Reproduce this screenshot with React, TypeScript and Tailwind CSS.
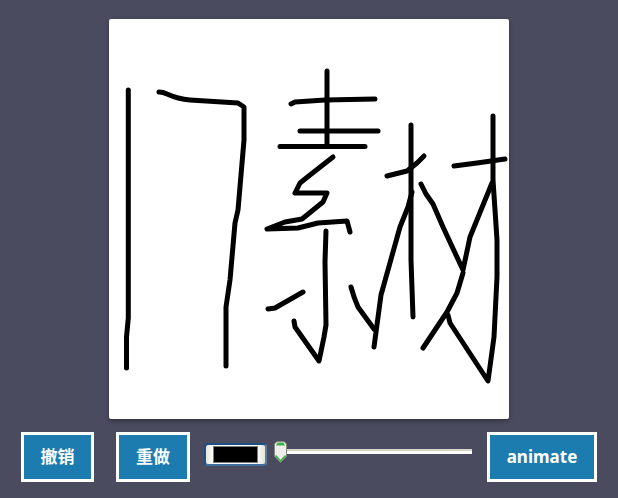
const strokes = [
  "M128.3 90 L128.3 318 L126.5 337 L126.5 368",
  "M159 92 Q163 92 167 94 Q178 99 190 100 L238 103 L244 107 L244 140 L238 210 L235 223 L230 280 L226 307 L226 366",
  "M327 71 L327 145",
  "M291 104 L295 102 L325 100 L375 99",
  "M300 131 L378 131",
  "M280 146.5 L365 146.5",
  "M333 157 L310 175 L300 183 L295 193 L327 193 L323 202 L302 219 L285 222 L267 229 L298 228 L318 223 L347 221 L350 232",
  "M326 231 L325 262 L326 325 L324 337 L319 361 L295 327 L294 321",
  "M303 292 L275 308 L268 309",
  "M351 287 Q354 298 358 307 L374 329",
  "M374 347 L381 295 L400 227 L408 207 L412 192",
  "M411 125 L411 193 L411 260 L413 317",
  "M387 176 L407 171 L417 163 L424 156",
  "M421 184 L426 194 L433 204 L443 227 L463 270 L470 237 L492 183",
  "M423 348 L447 312 L457 293 L463 273",
  "M493 116 L493 180 L497 240 L497 277 L494 337 L488 381 L450 323 L448 315",
  "M454 166 L477 163 L505 159",
];

function ActionButton({ label, width }: { label: string; width: string }) {
  return (
    <button
      className={`${width} h-[50px] shrink-0 border-[3px] border-white bg-[#1c7cb0] text-[17px] font-bold text-white [font-family:'Noto_Sans','Noto_Sans_CJK_SC',sans-serif]`}
    >
      {label}
    </button>
  );
}

export default function App() {
  return (
    <div className="flex h-[498px] w-[618px] flex-col items-center overflow-hidden bg-[#4b4b60] pt-[19px]">
      <div className="h-[400px] w-[400px] shrink-0 rounded-[2px] bg-white shadow-[0_2px_4px_rgba(0,0,0,0.35)]">
        <svg viewBox="109 19 400 400" className="block h-full w-full" fill="none" stroke="#000" strokeWidth="5" strokeLinecap="round" strokeLinejoin="round">
          {strokes.map((d, i) => (
            <path key={i} d={d} />
          ))}
        </svg>
      </div>

      <div className="mt-[13px] flex w-full items-start pl-[21px]">
        <ActionButton label="撤销" width="w-[73px]" />
        <div className="ml-[22px]">
          <ActionButton label="重做" width="w-[74px]" />
        </div>

        {/* colour picker */}
        <div className="ml-[14px] mt-[11px] flex h-[23px] w-[63px] shrink-0 items-center justify-center rounded-[4px] border-2 border-[#1d4f82] border-b-[#3f6f9e] border-r-[#5f7f9f] bg-[linear-gradient(90deg,#e6e6de_0%,#fdfdfa_12%,#fafaf5_88%,#e4e4dc_100%)]">
          <div className="h-[17px] w-[45px] border border-[#7c7c7c] bg-black" />
        </div>

        {/* stroke width slider */}
        <div className="ml-[7px] flex items-start">
          <svg width="13" height="22" viewBox="0 0 13 22" className="mt-[9px] block shrink-0">
            <path d="M0.5 3 L3 0.5 H10 L12.5 3 V15 L6.5 21.5 L0.5 15 Z" fill="#eeeeea" stroke="#85897f" />
            <path d="M2 4.5 L3.5 1.5 H9.5 L11 4.5 Z" fill="#3fb34a" />
            <path d="M1.5 14.5 L6.5 20 L11.5 14.5" fill="none" stroke="#44ad4d" strokeWidth="1.6" />
          </svg>
          <div className="mt-[17px] h-[5px] w-[185px] shrink-0 border-t-2 border-[#d6d6cc] bg-white" />
        </div>

        <div className="ml-[15px]">
          <ActionButton label="animate" width="w-[110px]" />
        </div>
      </div>
    </div>
  );
}
